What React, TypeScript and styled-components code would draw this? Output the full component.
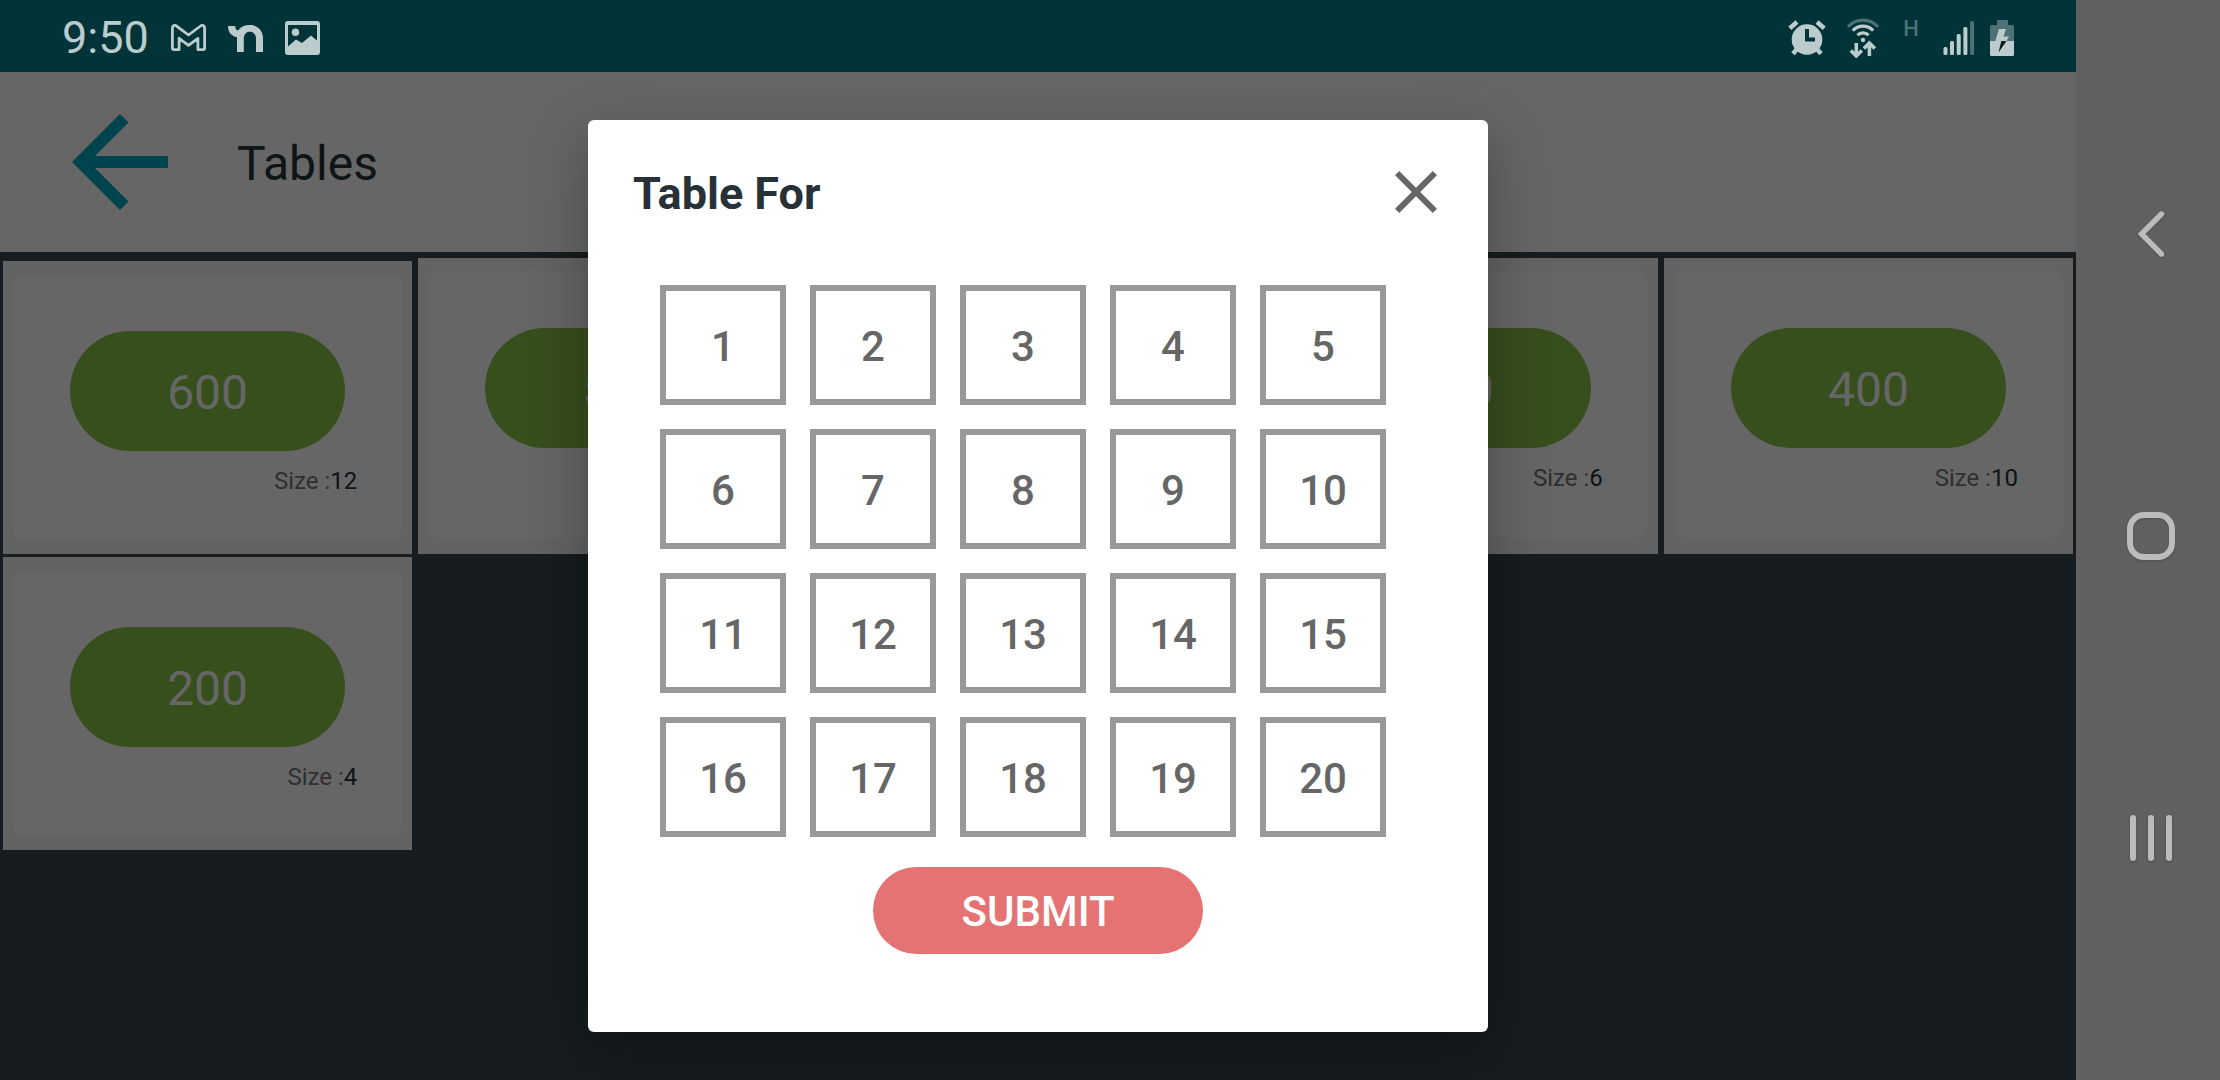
import React from "react";
import styled, { createGlobalStyle } from "styled-components";

const GlobalStyle = createGlobalStyle`
  *, *::before, *::after { box-sizing: border-box; }
  body { margin: 0; background: #37474f; font-family: Roboto, "Noto Sans", sans-serif; }
  button { font-family: inherit; cursor: pointer; }
`;

const Device = styled.div`
  display: grid;
  grid-template-columns: minmax(0, 1fr) 144px;
  min-height: 100vh;
`;

const Screen = styled.div`
  display: flex;
  flex-direction: column;
`;

const StatusBar = styled.header`
  display: flex;
  align-items: center;
  justify-content: space-between;
  height: 72px;
  padding: 3px 62px 0;
  background: #003438;
  color: #bccccd;
`;

const StatusGroup = styled.div<{ $gap: number }>`
  display: flex;
  align-items: center;
  gap: ${(p) => p.$gap}px;

  svg {
    display: block;
    flex: none;
  }
`;

const Clock = styled.time`
  font-size: 45px;
  line-height: 52px;
`;

const NetworkType = styled.span`
  width: 22px;
  padding-bottom: 18px;
  font-size: 22px;
  line-height: 24px;
  font-weight: 500;
  text-align: center;
  color: #4d7174;
`;

const AppArea = styled.div`
  position: relative;
  flex: 1;
  display: flex;
  flex-direction: column;
  background: #37474f;
`;

const Toolbar = styled.div`
  display: flex;
  align-items: center;
  gap: 69px;
  height: 180px;
  padding: 0 72px;
  background: #ffffff;
`;

const BackButton = styled.button`
  display: block;
  padding: 0;
  border: 0;
  background: none;
  color: #00acc1;

  svg {
    display: block;
  }
`;

const PageTitle = styled.h1`
  margin: 0;
  padding-top: 3px;
  font-size: 48px;
  line-height: 56px;
  font-weight: 400;
  color: #263238;
`;

const TableGrid = styled.main`
  display: grid;
  grid-template-columns: repeat(5, minmax(0, 1fr));
  gap: 3px 6px;
  padding: 6px 3px;
`;

const Card = styled.article`
  padding: 13px 10px;
  background: #f7f7f7;

  &:first-child {
    margin-top: 3px;
  }
`;

const CardBody = styled.div`
  display: flex;
  flex-direction: column;
  gap: 16px;
  height: 267px;
  padding: 57px 45px 0 57px;
  border-radius: 12px;
  background: #ffffff;
`;

const TablePill = styled.button`
  height: 120px;
  margin-right: 12px;
  padding: 3px 0 0;
  border: 0;
  border-radius: 60px;
  background: #8bc34a;
  color: #ffffff;
  font-size: 48px;
  line-height: 56px;
`;

const Seats = styled.p`
  margin: 0;
  font-size: 24px;
  line-height: 28px;
  text-align: right;
  color: #757575;

  span {
    color: #263238;
  }
`;

const Scrim = styled.div`
  position: absolute;
  inset: 0;
  display: flex;
  align-items: center;
  justify-content: center;
  background: rgba(0, 0, 0, 0.6);
`;

const Dialog = styled.section`
  width: 900px;
  padding: 36px 36px 78px 45px;
  border-radius: 6px;
  background: #ffffff;
  box-shadow: 0 18px 60px rgba(0, 0, 0, 0.3);
`;

const DialogHeader = styled.div`
  display: flex;
  align-items: center;
  justify-content: space-between;
  height: 72px;
`;

const DialogTitle = styled.h2`
  margin: 0;
  padding-top: 3px;
  font-size: 45px;
  line-height: 52px;
  font-weight: 700;
  color: #263238;
`;

const CloseButton = styled.button`
  padding: 0;
  border: 0;
  background: none;
  color: #666666;

  svg {
    display: block;
  }
`;

const NumberGrid = styled.div`
  display: grid;
  grid-template-columns: repeat(5, 126px);
  gap: 24px;
  margin: 57px 0 30px 27px;
`;

const NumberButton = styled.button`
  height: 120px;
  padding: 3px 0 0;
  border: 6px solid #999999;
  background: #ffffff;
  color: #666666;
  font-size: 42px;
  line-height: 48px;
  font-weight: 500;
`;

const SubmitButton = styled.button`
  display: block;
  width: 330px;
  height: 87px;
  margin-left: 240px;
  padding: 3px 0 0;
  border: 0;
  border-radius: 44px;
  background: #e57373;
  color: #ffffff;
  font-size: 42px;
  line-height: 48px;
  font-weight: 500;
`;

const SystemNav = styled.nav`
  display: flex;
  flex-direction: column;
  align-items: center;
  justify-content: center;
  gap: 255px;
  padding: 0 0 9px 6px;
  background: #606060;
`;

const NavButton = styled.button`
  padding: 0;
  border: 0;
  background: none;
  color: #bcbcbc;

  svg {
    display: block;
    overflow: visible;
    filter: drop-shadow(0 1px 1px rgba(0, 0, 0, 0.2));
  }
`;

const MailIcon = () => (
  <svg width="35" height="27" viewBox="0 0 35 27" fill="none" stroke="currentColor" strokeWidth="2.8" strokeLinejoin="round">
    <path d="M1.4 4.2C1.4 1.5 3.6 .7 5.4 2L17.5 11 29.600 2C31.400 .7 33.600 1.5 33.600 4.2V24.300C33.600 25.200 33 25.600 32.200 25.600H26.900V14.300L17.500 21.300 8.100 14.300V25.600H2.800C2 25.600 1.400 25.200 1.400 24.300Z" />
  </svg>
);

const NeighborIcon = () => (
  <svg width="35" height="28" viewBox="0 0 35 28" fill="currentColor">
    <path d="M0 2H7.3C7.3 5 8.4 6.6 10.2 6.2 12.7 2.7 16.7 1 21.5 1 29.5 1 35 6.5 35 14V28H28V15C28 10.5 25.5 7.8 21.8 7.8 18 7.8 15.8 10.5 15.8 15V28H9V13.2C3.3 12 0 8.5 0 2Z" />
  </svg>
);

const PictureIcon = () => (
  <svg width="35" height="34" viewBox="0 0 35 34" fill="currentColor" fillRule="evenodd">
    <path d="M3 0H32Q35 0 35 3V31Q35 34 32 34H3Q0 34 0 31V3Q0 0 3 0ZM3 4V25.5L11 18.5 17 22 26 14.5 32 19.5V4Z" />
    <circle cx="10.5" cy="11.3" r="3.7" />
  </svg>
);

const AlarmIcon = () => (
  <svg width="38" height="36" viewBox="0 0 38 36" fill="none" stroke="currentColor" strokeWidth="4.5">
    <circle cx="19" cy="19.5" r="15.3" fill="currentColor" stroke="none" />
    <path d="M1.8 8.2 9 2M36.2 8.2 29 2M9 29 5 33.8M29 29 33 33.8" />
    <path d="M19 9V19.5H27" stroke="#003438" strokeWidth="4" />
  </svg>
);

const WifiIcon = () => (
  <svg width="32" height="40" viewBox="0 0 32 40" fill="none" stroke="currentColor" strokeWidth="3.2">
    <path d="M1 8.8A20 20 0 0 1 31 8.8" stroke="#4d7174" />
    <path d="M5.8 12.6A14 14 0 0 1 26.2 12.6M10.4 17.2A8 8 0 0 1 21.6 17.2" />
    <circle cx="16" cy="22" r="2.2" fill="currentColor" stroke="none" />
    <path d="M9.3 25V37.5M3.8 32.4 9.3 37.9 14.8 32.4M22.4 38V25.5M16.9 30.5 22.4 25 27.9 30.5" strokeWidth="3.6" />
  </svg>
);

const SignalIcon = () => (
  <svg width="32" height="34" viewBox="0 0 32 34" fill="currentColor">
    <rect x="0.5" y="26" width="4" height="8" rx="1.5" />
    <rect x="7" y="20" width="4" height="14" rx="1.5" />
    <rect x="13.7" y="13" width="4" height="21" rx="1.5" />
    <rect x="20.4" y="6" width="4" height="28" rx="1.5" />
    <rect x="27.1" y="0" width="4" height="34" rx="1.5" fill="#4d7174" />
  </svg>
);

const BatteryIcon = () => (
  <svg width="24" height="36" viewBox="0 0 24 36">
    <path d="M7 0H18V5H22.5Q24 5 24 6.5V21H0V6.5Q0 5 1.5 5H7Z" fill="#4d7174" />
    <path d="M0 21H24V34.5Q24 36 22.5 36H1.5Q0 36 0 34.5Z" fill="currentColor" />
    <path d="M9 9H16L13.5 16.5H19L16.5 21H11.5L11 22H5Z" fill="currentColor" />
    <path d="M11.3 21H16.5L8.5 32.5Z" fill="#0b1b1d" />
  </svg>
);

type TableInfo = { id: number; name?: string; size?: number };

const tables: TableInfo[] = [
  { id: 1, name: "600", size: 12 },
  { id: 2, name: "500" },
  { id: 3 },
  { id: 4, name: "300", size: 6 },
  { id: 5, name: "400", size: 10 },
  { id: 6, name: "200", size: 4 },
];

const guestCounts = Array.from({ length: 20 }, (_, i) => i + 1);

export default function App() {
  return (
    <Device>
      <GlobalStyle />
      <Screen>
        <StatusBar>
          <StatusGroup $gap={22}>
            <Clock>9:50</Clock>
            <MailIcon />
            <NeighborIcon />
            <PictureIcon />
          </StatusGroup>
          <StatusGroup $gap={21}>
            <AlarmIcon />
            <WifiIcon />
            <NetworkType>H</NetworkType>
            <StatusGroup $gap={15}>
              <SignalIcon />
              <BatteryIcon />
            </StatusGroup>
          </StatusGroup>
        </StatusBar>
        <AppArea>
          <Toolbar>
            <BackButton aria-label="Back">
              <svg width="96" height="96" viewBox="4 4 16 16" fill="currentColor">
                <path d="M20 11H7.83l5.59-5.59L12 4l-8 8 8 8 1.41-1.41L7.83 13H20v-2z" />
              </svg>
            </BackButton>
            <PageTitle>Tables</PageTitle>
          </Toolbar>
          <TableGrid>
            {tables.map((table) => (
              <Card key={table.id}>
                <CardBody>
                  <TablePill aria-label={`Table ${table.name ?? table.id}`}>{table.name}</TablePill>
                  {table.size !== undefined && (
                    <Seats>
                      Size :<span>{table.size}</span>
                    </Seats>
                  )}
                </CardBody>
              </Card>
            ))}
          </TableGrid>
          <Scrim>
            <Dialog role="dialog" aria-modal="true" aria-labelledby="dialog-title">
              <DialogHeader>
                <DialogTitle id="dialog-title">Table For</DialogTitle>
                <CloseButton aria-label="Close">
                  <svg width="72" height="72" viewBox="0 0 24 24" fill="currentColor">
                    <path d="M19 6.41 17.59 5 12 10.59 6.41 5 5 6.41 10.59 12 5 17.59 6.41 19 12 13.41 17.59 19 19 17.59 13.41 12z" />
                  </svg>
                </CloseButton>
              </DialogHeader>
              <NumberGrid>
                {guestCounts.map((count) => (
                  <NumberButton key={count}>{count}</NumberButton>
                ))}
              </NumberGrid>
              <SubmitButton>SUBMIT</SubmitButton>
            </Dialog>
          </Scrim>
        </AppArea>
      </Screen>
      <SystemNav aria-label="System">
        <NavButton aria-label="Go back">
          <svg width="28" height="46" viewBox="0 0 28 46" fill="none" stroke="currentColor" strokeWidth="5.4" strokeLinecap="round">
            <path d="M24.500 3 4.500 23 24.500 43" />
          </svg>
        </NavButton>
        <NavButton aria-label="Home">
          <svg width="48" height="48" viewBox="0 0 48 48" fill="none" stroke="currentColor" strokeWidth="6">
            <rect x="3" y="3" width="42" height="42" rx="14" />
          </svg>
        </NavButton>
        <NavButton aria-label="Recent apps">
          <svg width="42" height="46" viewBox="0 0 42 46" fill="currentColor">
            <rect width="6" height="46" rx="3" />
            <rect x="18" width="6" height="46" rx="3" />
            <rect x="36" width="6" height="46" rx="3" />
          </svg>
        </NavButton>
      </SystemNav>
    </Device>
  );
}
